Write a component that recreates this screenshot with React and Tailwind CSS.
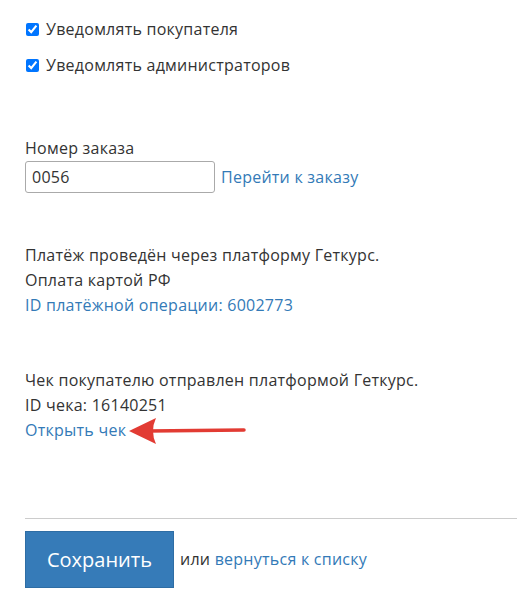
import { useState } from 'react'

const RedArrow = () => (
  <svg
    className="absolute left-[calc(100%+2px)] top-1/2 -translate-y-1/2"
    width="118"
    height="30"
    viewBox="0 0 118 30"
  >
    <line x1="20" y1="15" x2="116" y2="14" stroke="#e23b33" strokeWidth="3.5" strokeLinecap="round" />
    <path d="M1 15 L28 2 Q22 15 28 28 Z" fill="#e23b33" />
  </svg>
)

const App = () => {
  const [notifyBuyer, setNotifyBuyer] = useState(true)
  const [notifyAdmins, setNotifyAdmins] = useState(true)
  const [orderNumber, setOrderNumber] = useState('0056')

  return (
    <div className="min-h-[608px] bg-white pl-[25px] pt-[17px] text-[16px] leading-[25px] tracking-[0.25px] text-[#333] font-['Open_Sans',sans-serif]">
      {/* Уведомления */}
      <div className="flex flex-col gap-[11px]">
        <label className="flex items-center gap-[7px] h-[25px]">
          <input
            type="checkbox"
            checked={notifyBuyer}
            onChange={(e) => setNotifyBuyer(e.target.checked)}
            className="w-[13px] h-[13px] m-0 ml-[1px] accent-[#0075ff]"
          />
          Уведомлять покупателя
        </label>
        <label className="flex items-center gap-[7px] h-[25px]">
          <input
            type="checkbox"
            checked={notifyAdmins}
            onChange={(e) => setNotifyAdmins(e.target.checked)}
            className="w-[13px] h-[13px] m-0 ml-[1px] accent-[#0075ff]"
          />
          Уведомлять администраторов
        </label>
      </div>

      {/* Номер заказа */}
      <div className="mt-[58px]">
        <div>Номер заказа</div>
        <div className="flex items-center gap-[6px]">
          <input
            value={orderNumber}
            onChange={(e) => setOrderNumber(e.target.value)}
            className="w-[190px] h-[32px] px-[6px] border border-[#aaa] rounded-[3px] text-[16px] tracking-[0.25px] text-[#333] outline-none"
          />
          <a href="#" className="text-[#337ab7]">Перейти к заказу</a>
        </div>
      </div>

      {/* Платёж */}
      <div className="mt-[50px]">
        <div>Платёж проведён через платформу Геткурс.</div>
        <div>Оплата картой РФ</div>
        <a href="#" className="text-[#337ab7]">ID платёжной операции: 6002773</a>
      </div>

      {/* Чек */}
      <div className="mt-[50px]">
        <div>Чек покупателю отправлен платформой Геткурс.</div>
        <div>ID чека: 16140251</div>
        <div>
          <a href="#" className="relative inline-block text-[#337ab7]">
            Открыть чек
            <RedArrow />
          </a>
        </div>
      </div>

      <hr className="mt-[75px] border-0 border-t border-[#ccc]" />

      <div className="mt-[12px] flex items-center gap-[6px]">
        <button className="w-[149px] h-[57px] bg-[#367bb8] border border-[#2e6da4] text-white text-[20px] tracking-normal">
          Сохранить
        </button>
        <span>
          или <a href="#" className="text-[#337ab7]">вернуться к списку</a>
        </span>
      </div>
    </div>
  )
}

export default App
